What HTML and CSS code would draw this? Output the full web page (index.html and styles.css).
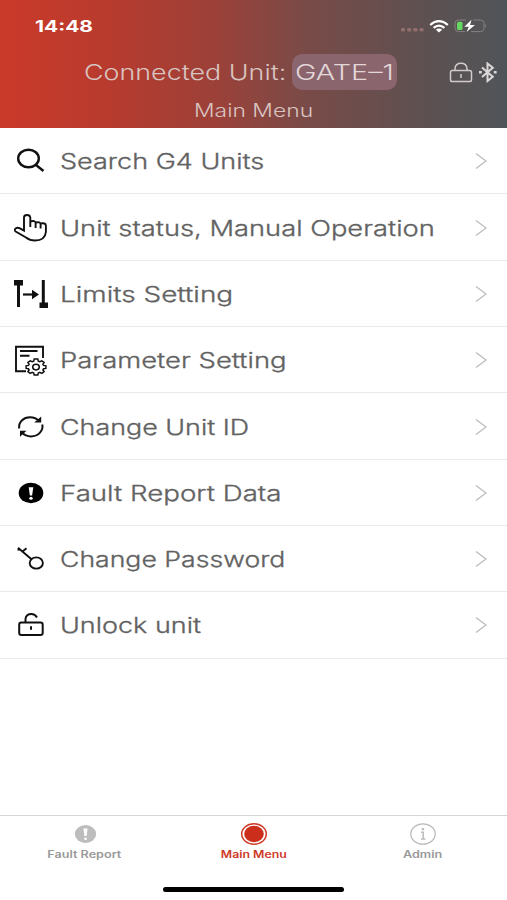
FILE: index.html
```html
<!DOCTYPE html>
<html lang="en">
<head>
<meta charset="utf-8">
<title>Main Menu</title>
<link rel="stylesheet" href="styles.css">
</head>
<body>
<div class="app">
  <header class="header">
    <div class="status">
      <span class="time">14:48</span>
      <div class="status-icons">
        <svg width="23" height="4" viewBox="0 0 23 4" fill="#916f6e"><rect width="4" height="3.6" rx="1.3"/><rect x="6.2" width="4" height="3.6" rx="1.3"/><rect x="12.4" width="4" height="3.6" rx="1.3"/><rect x="18.6" width="4" height="3.6" rx="1.3"/></svg>
        <svg class="wifi" width="20" height="13" viewBox="0 0 20 13" fill="none" stroke="#fff" stroke-width="2.2"><path d="M1.2 5Q10-2.6 18.8 5M4.6 7.9Q10 3.3 15.4 7.9"/><path d="M6.9 9.8Q10 7.4 13.1 9.8L10 12.4z" fill="#fff" stroke="none"/></svg>
        <svg class="battery" width="33" height="14" viewBox="0 0 33 14"><path d="M12 1H4.5Q1 1 1 4.3v5Q1 12.6 4.5 12.6H11M19 1h7.5Q30 1 30 4.3v5q0 3.3-3.5 3.3H17" fill="none" stroke="#85807f"/><path d="M31.3 4.8q2 2 0 4z" fill="#85807f"/><rect x="3" y="2.7" width="5.5" height="8.3" rx="1.5" fill="#65d660"/><path d="M17.5.8 10.3 7.8h4.500l-2.200 5.300 8.300-7.200h-4.800z" fill="#fff"/></svg>
      </div>
    </div>
    <div class="unit">
      <span class="unit-label"><span class="stretch">Connected Unit:</span></span>
      <span class="badge"><span class="stretch wide">GATE–1</span></span>
      <svg class="lock" width="24" height="21" viewBox="0 0 24 21" fill="none" stroke="#d2caca" stroke-width="1.5"><rect x="1.5" y="8.500" width="21" height="11" rx="1.800"/><path d="M6 8.500V6.500Q6.500 1.200 12 1.200t6 5.300v2M12 12v4"/></svg>
      <svg class="bluetooth" width="20" height="21" viewBox="0 0 20 21" fill="none" stroke="#ddd8d8" stroke-width="2"><path d="m4 5.500 10.800 9.300-5.300 4.200V1.500l5.300 4.200L4 15"/><path d="M1 10.200h2.800M15.800 10.200h2.800" stroke-width="2.500"/></svg>
    </div>
    <h1 class="title"><span class="stretch">Main Menu</span></h1>
  </header>

  <main class="menu">
    <a class="row"><svg class="icon" viewBox="0 0 36 32" stroke-width="2.400"><ellipse cx="14.500" cy="13.500" rx="10.300" ry="8.800"/><path d="m21.700 19.700 7.800 6.300"/></svg><span class="label search">Search G4 Units</span><svg class="chevron" viewBox="0 0 12 18"><path d="m1 1.500 10 7.500L1 16.500"/></svg></a>
    <a class="row"><svg class="icon" viewBox="0 0 36 32" stroke-width="1.900"><path d="M10 16V5.500Q10 3 13 3t3.300 2.500V15M16.300 9.500q5-1.500 5.300 1.500v5M21.600 10.500q4.700-1 5 1.500v4.500M26.600 11.500q5-1 5.300 2v6.500q-.8 8.500-11 8.500-5 0-8.900-3L1.700 19.500q-2-1.800.2-3.200 1.500-1 3.600-.1L10 18.700V15"/></svg><span class="label">Unit status, Manual Operation</span><svg class="chevron" viewBox="0 0 12 18"><path d="m1 1.500 10 7.500L1 16.500"/></svg></a>
    <a class="row"><svg class="icon" viewBox="0 0 36 32" stroke-width="3"><path d="M4.500 4v25M29.300 2v25"/><path d="M9 16.500h13" stroke-width="2.200"/><path d="M0 2h9v5.500H0zM25.500 24.500H34V30h-8.500zM18 11.800l7 4.700-7 4.700z" fill="#111" stroke="none"/></svg><span class="label limits">Limits Setting</span><svg class="chevron" viewBox="0 0 12 18"><path d="m1 1.500 10 7.500L1 16.500"/></svg></a>
    <a class="row"><svg class="icon" viewBox="0 0 36 32" stroke-width="1.900"><path d="M12 27.300H2V2.800h27V14"/><path d="M6 7h17.500M6 11.800h9.500"/><g transform="translate(-2 -.5)" stroke-width="1.500"><path d="m22.200 15.600h3.600l.5 2.100 1.500.6 2.100-1 2.200 1.700-1.200 1.700.7 1.200 2.300.4v2.600l-2.300.4-.7 1.200 1.200 1.700-2.200 1.700-2.100-1-1.500.6-.5 2.100h-3.600l-.5-2.100-1.500-.6-2.100 1-2.200-1.700 1.200-1.700-.7-1.200-2.300-.4v-2.600l2.300-.4.7-1.200-1.200-1.700 2.200-1.700 2.100 1 1.500-.6z"/><ellipse cx="24" cy="23.600" rx="3.300" ry="2.800"/></g></svg><span class="label param">Parameter Setting</span><svg class="chevron" viewBox="0 0 12 18"><path d="m1 1.500 10 7.500L1 16.500"/></svg></a>
    <a class="row"><svg class="icon" viewBox="0 0 36 32" stroke-width="2"><path d="M5.200 17.500C4.300 11 9.500 6.300 16 6.300q5.500 0 9.500 4M28.300 13.500C29.600 20 24 25.400 17 25.400q-5.500 0-9.300-4"/><path d="M27.200 5.500v6h-7zM6 25.800v-6h6.500z" fill="#111" stroke="none"/></svg><span class="label change">Change Unit ID</span><svg class="chevron" viewBox="0 0 12 18"><path d="m1 1.500 10 7.500L1 16.500"/></svg></a>
    <a class="row"><svg class="icon" viewBox="0 0 36 32"><ellipse cx="17" cy="16" rx="12.300" ry="10.200" fill="#000" stroke="none"/><path d="M14.700 10.300h4.600l-1.200 8.200h-2.200z" fill="#fff" stroke="none"/><ellipse cx="17" cy="21.300" rx="1.700" ry="1.500" fill="#fff" stroke="none"/></svg><span class="label fault">Fault Report Data</span><svg class="chevron" viewBox="0 0 12 18"><path d="m1 1.500 10 7.500L1 16.500"/></svg></a>
    <a class="row"><svg class="icon" viewBox="0 0 36 32" stroke-width="1.900"><ellipse cx="22.300" cy="20" rx="6.600" ry="5.600"/><path d="M4 4.800 17.500 16.300M8.500 8.500l4-3.300M3.500 6.500l3.500.3"/></svg><span class="label password">Change Password</span><svg class="chevron" viewBox="0 0 12 18"><path d="m1 1.500 10 7.500L1 16.500"/></svg></a>
    <a class="row"><svg class="icon" viewBox="0 0 36 32" stroke-width="2"><rect x="5.200" y="13.500" width="23.500" height="12.500" rx="2.200"/><path d="M11.500 13.500V10q.5-5 6-5 3.500 0 5.500 3.500M17 17.300v3.400"/></svg><span class="label unlock">Unlock unit</span><svg class="chevron" viewBox="0 0 12 18"><path d="m1 1.500 10 7.500L1 16.500"/></svg></a>
  </main>

  <nav class="tabs">
    <a class="tab"><svg width="28" height="24" viewBox="0 0 28 24"><ellipse cx="14.500" cy="12" rx="10.700" ry="9" fill="#bdbdbd"/><path d="M12.400 6.500h4.200l-1 7.500h-2.200z" fill="#fff"/><ellipse cx="14.500" cy="16.700" rx="1.500" ry="1.300" fill="#fff"/></svg><span class="tab-label">Fault Report</span></a>
    <a class="tab active"><svg width="28" height="24" viewBox="0 0 28 24"><ellipse cx="14" cy="12" rx="12.300" ry="10.200" fill="none" stroke="#cf3a27" stroke-width="1.500"/><ellipse cx="14" cy="12" rx="9.800" ry="8.200" fill="#cb2f1c"/></svg><span class="tab-label">Main Menu</span></a>
    <a class="tab"><svg width="28" height="24" viewBox="0 0 28 24" fill="none" stroke="#bbb"><ellipse cx="14" cy="12" rx="12.200" ry="10.200" stroke-width="1.300"/><path d="M12 10.300h2.200v6.500M12 17h4.500" stroke-width="1.500"/><path d="M14 6v2.200" stroke-width="2.400"/></svg><span class="tab-label">Admin</span></a>
  </nav>
  <div class="home"></div>
</div>
</body>
</html>
```
FILE: styles.css
```css
* { box-sizing: border-box; }
body { margin: 0; background: #fff; font-family: Inter, "Liberation Sans", sans-serif; }
.app { height: 900px; display: flex; flex-direction: column; overflow: hidden; }
.header { height: 128.2px; flex: none; background: linear-gradient(90deg, #cb3a2a 0%, #b73b2e 22%, #9b4139 43%, #784b48 61%, #5b5152 86%, #505559 100%); color: #d8c4c0; }
.status { height: 52px; padding: 0 20px 0 35px; display: flex; align-items: center; justify-content: space-between; }
.time { color: #fff; font-size: 15.5px; font-weight: 700; transform: scaleX(1.35); transform-origin: left; }
.status-icons { display: flex; align-items: center; }
.status-icons svg:first-child { margin-top: 8px; }
.wifi { margin-left: 5px; }
.battery { margin-left: 5px; }
.unit { height: 40px; display: flex; align-items: center; padding-left: 84px; font-size: 21.5px; font-weight: 300; white-space: nowrap; }
.unit-label { width: 208px; }
.stretch { display: inline-block; transform: scaleX(1.25); transform-origin: left; }
.wide { transform: scaleX(1.34); }
.badge { width: 105px; height: 36px; padding-left: 3px; line-height: 37px; border-radius: 10px; background: #8b656d; color: #e3d7d9; }
.lock { margin-left: 52px; }
.bluetooth { margin-left: 5px; }
.title { margin: 6px 0 0 194px; font-size: 18px; line-height: 25px; font-weight: 300; }
.title .stretch { transform: scaleX(1.27); }
.menu { flex: none; }
.row { height: 66.3px; display: flex; align-items: center; padding: 1px 20px 0 14px; border-bottom: 1px solid #e9e9e9; }
.icon { width: 36px; height: 32px; fill: none; stroke: #111; flex: none; }
.label { margin: 1px auto 0 10px; font-size: 21px; font-weight: 300; color: #626262; -webkit-text-stroke: .3px #626262; white-space: nowrap; transform: scaleX(1.3); transform-origin: left; }
.search { transform: scaleX(1.287); }
.limits { transform: scaleX(1.33); }
.param { transform: scaleX(1.307); }
.change { transform: scaleX(1.28); }
.fault { transform: scaleX(1.317); }
.password { transform: scaleX(1.268); }
.unlock { transform: scaleX(1.285); }
.chevron { width: 12px; height: 18px; fill: none; stroke: #bcbcbc; stroke-width: 1.3; }
.tabs { margin-top: auto; height: 65px; flex: none; display: grid; grid-template-columns: repeat(3, 1fr); border-top: 1px solid #d3d7d7; }
.tab { display: flex; flex-direction: column; align-items: center; padding-top: 6px; color: #999; }
.active { color: #cf3a27; }
.tab-label { margin-top: 1px; font-size: 10px; line-height: 14px; font-weight: 600; transform: scaleX(1.26); }
.active .tab-label { transform: scaleX(1.23); }
.home { width: 181px; height: 5px; margin: 7px auto 8px; flex: none; border-radius: 3px; background: #000; }
```
